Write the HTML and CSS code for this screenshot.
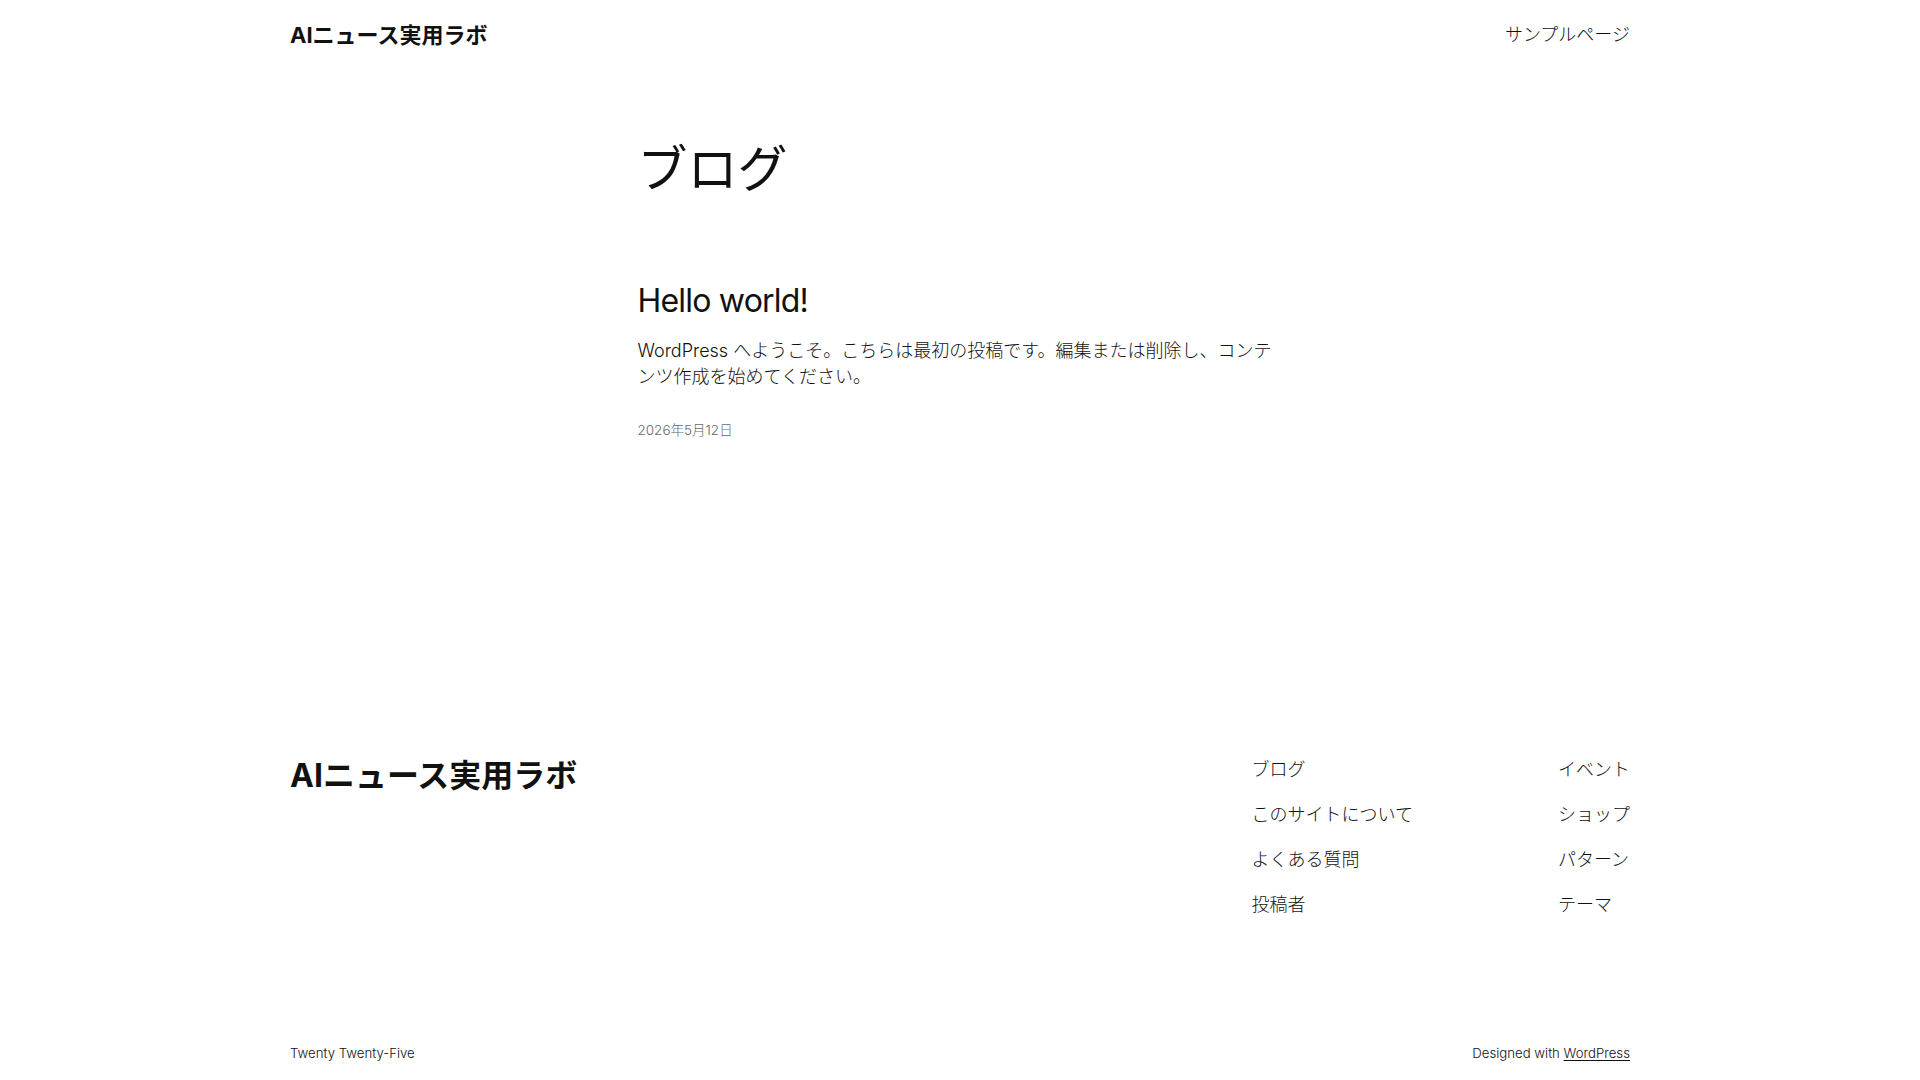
FILE: index.html
```html
<!DOCTYPE html>
<html lang="ja">
<head>
    <meta charset="utf-8">
    <title>ブログ – AIニュース実用ラボ</title>
    <link rel="stylesheet" href="styles.css">
</head>
<body>
    <div class="page">
        <header class="site-header wide">
            <a class="site-title" href="#">AIニュース実用ラボ</a>
            <nav class="header-nav">
                <a href="#">サンプルページ</a>
            </nav>
        </header>

        <main class="content">
            <h1 class="query-title">ブログ</h1>

            <article class="post">
                <h2 class="post-title"><a href="#">Hello world!</a></h2>
                <p class="post-excerpt">WordPress へようこそ。こちらは最初の投稿です。編集または削除し、コンテンツ作成を始めてください。</p>
                <div class="post-date">2026年5月12日</div>
            </article>
        </main>

        <footer class="site-footer wide">
            <div class="footer-top">
                <a class="footer-title" href="#">AIニュース実用ラボ</a>
                <div class="footer-links">
                    <ul class="link-col">
                        <li><a href="#">ブログ</a></li>
                        <li><a href="#">このサイトについて</a></li>
                        <li><a href="#">よくある質問</a></li>
                        <li><a href="#">投稿者</a></li>
                    </ul>
                    <ul class="link-col">
                        <li><a href="#">イベント</a></li>
                        <li><a href="#">ショップ</a></li>
                        <li><a href="#">パターン</a></li>
                        <li><a href="#">テーマ</a></li>
                    </ul>
                </div>
            </div>
            <div class="footer-bottom">
                <span>Twenty Twenty-Five</span>
                <span>Designed with <a href="#" class="underline">WordPress</a></span>
            </div>
        </footer>
    </div>
</body>
</html>
```

FILE: styles.css
```css
body {
    margin: 0;
    background: #ffffff;
    color: #111111;
    font-family: "Inter", "Noto Sans CJK JP", sans-serif;
    font-weight: 300;
    font-size: 18px;
}
a {
    color: inherit;
    text-decoration: none;
}
.page {
    min-height: 1080px;
    display: flex;
    flex-direction: column;
}
.wide {
    width: 1340px;
    margin: 0 auto;
}

/* header */
.site-header {
    height: 69px;
    display: flex;
    align-items: center;
    justify-content: space-between;
}
.site-title {
    font-size: 22px;
    font-weight: 700;
    line-height: 30px;
}
.header-nav a {
    font-size: 18px;
    line-height: 26px;
}

/* main content */
.content {
    width: 645px;
    margin: 0 auto;
}
.query-title {
    margin: 70px 0 0;
    font-size: 50px;
    font-weight: 400;
    line-height: 60px;
}
.post-title {
    margin: 83px 0 0;
    font-size: 32px;
    font-weight: 400;
    line-height: 38px;
    letter-spacing: -0.8px;
}
.post-excerpt {
    margin: 18px 0 0;
    font-size: 18px;
    line-height: 26px;
}
.post-date {
    margin-top: 29px;
    font-size: 13.5px;
    line-height: 22px;
    color: #686868;
}

/* footer */
.site-footer {
    margin-top: 315px;
}
.footer-top {
    display: flex;
    justify-content: space-between;
    align-items: flex-start;
}
.footer-title {
    font-size: 32px;
    font-weight: 700;
    line-height: 40px;
}
.footer-links {
    display: flex;
    gap: 145px;
    margin-top: 1px;
}
.link-col {
    list-style: none;
    margin: 0;
    padding: 0;
    display: flex;
    flex-direction: column;
    gap: 19px;
}
.link-col li {
    font-size: 18px;
    line-height: 26px;
}
.footer-bottom {
    margin-top: 125px;
    display: flex;
    justify-content: space-between;
    font-size: 13.2px;
    line-height: 20px;
}
.underline {
    text-decoration: underline;
    text-underline-offset: 2px;
}
```
